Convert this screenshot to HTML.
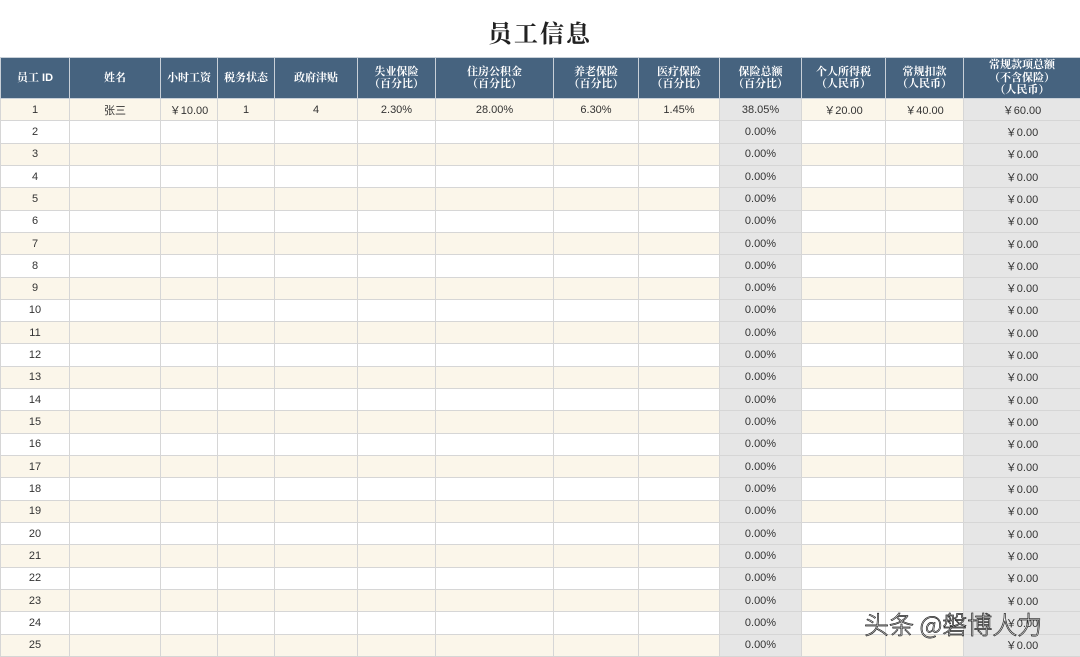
<!DOCTYPE html>
<html><head><meta charset="utf-8"><style>
body{margin:0;width:1080px;height:656px;background:#fff;overflow:hidden;position:relative;font-family:"Liberation Sans","Noto Sans CJK SC",sans-serif}
h1{position:absolute;top:14px;left:0;width:1080px;text-align:center;margin:0;font:bold 24px "Noto Serif CJK SC","Noto Sans CJK SC",serif;color:#222;letter-spacing:2px}
table{position:absolute;top:57px;left:0;border-collapse:collapse;table-layout:fixed;width:1080px}
td,th{border:1px solid #d6d6d6;text-align:center;font-size:11px;color:#333;padding:0;height:21.32px;overflow:hidden;white-space:nowrap}
th{background:#46637f;color:#fff;font-weight:bold;font-size:11px;line-height:12.5px;height:40px;border-color:#c8d0d8;font-family:"Liberation Sans","Noto Serif CJK SC",serif}
tr.o td{background:#fbf6ea}
td.g,tr.o td.g{background:#e6e6e6}
.wm{position:absolute;left:864px;top:606px;font:300 25px "Noto Sans CJK SC",sans-serif;color:#fff;-webkit-text-stroke:0.7px #222}
</style></head><body>
<h1>员工信息</h1>
<table>
<colgroup><col style="width:69px"><col style="width:91px"><col style="width:57px"><col style="width:57px"><col style="width:83px"><col style="width:78px"><col style="width:118px"><col style="width:85px"><col style="width:81px"><col style="width:82px"><col style="width:84px"><col style="width:78px"><col style="width:117px"></colgroup>
<tr><th>员工 ID</th><th>姓名</th><th>小时工资</th><th>税务状态</th><th>政府津贴</th><th>失业保险<br>（百分比）</th><th>住房公积金<br>（百分比）</th><th>养老保险<br>（百分比）</th><th>医疗保险<br>（百分比）</th><th>保险总额<br>（百分比）</th><th>个人所得税<br>（人民币）</th><th>常规扣款<br>（人民币）</th><th>常规款项总额<br>（不含保险）<br>（人民币）</th></tr>
<tr class="o"><td>1</td><td>张三</td><td>￥10.00</td><td>1</td><td>4</td><td>2.30%</td><td>28.00%</td><td>6.30%</td><td>1.45%</td><td class="g">38.05%</td><td>￥20.00</td><td>￥40.00</td><td class="g">￥60.00</td></tr>
<tr><td>2</td><td></td><td></td><td></td><td></td><td></td><td></td><td></td><td></td><td class="g">0.00%</td><td></td><td></td><td class="g">￥0.00</td></tr>
<tr class="o"><td>3</td><td></td><td></td><td></td><td></td><td></td><td></td><td></td><td></td><td class="g">0.00%</td><td></td><td></td><td class="g">￥0.00</td></tr>
<tr><td>4</td><td></td><td></td><td></td><td></td><td></td><td></td><td></td><td></td><td class="g">0.00%</td><td></td><td></td><td class="g">￥0.00</td></tr>
<tr class="o"><td>5</td><td></td><td></td><td></td><td></td><td></td><td></td><td></td><td></td><td class="g">0.00%</td><td></td><td></td><td class="g">￥0.00</td></tr>
<tr><td>6</td><td></td><td></td><td></td><td></td><td></td><td></td><td></td><td></td><td class="g">0.00%</td><td></td><td></td><td class="g">￥0.00</td></tr>
<tr class="o"><td>7</td><td></td><td></td><td></td><td></td><td></td><td></td><td></td><td></td><td class="g">0.00%</td><td></td><td></td><td class="g">￥0.00</td></tr>
<tr><td>8</td><td></td><td></td><td></td><td></td><td></td><td></td><td></td><td></td><td class="g">0.00%</td><td></td><td></td><td class="g">￥0.00</td></tr>
<tr class="o"><td>9</td><td></td><td></td><td></td><td></td><td></td><td></td><td></td><td></td><td class="g">0.00%</td><td></td><td></td><td class="g">￥0.00</td></tr>
<tr><td>10</td><td></td><td></td><td></td><td></td><td></td><td></td><td></td><td></td><td class="g">0.00%</td><td></td><td></td><td class="g">￥0.00</td></tr>
<tr class="o"><td>11</td><td></td><td></td><td></td><td></td><td></td><td></td><td></td><td></td><td class="g">0.00%</td><td></td><td></td><td class="g">￥0.00</td></tr>
<tr><td>12</td><td></td><td></td><td></td><td></td><td></td><td></td><td></td><td></td><td class="g">0.00%</td><td></td><td></td><td class="g">￥0.00</td></tr>
<tr class="o"><td>13</td><td></td><td></td><td></td><td></td><td></td><td></td><td></td><td></td><td class="g">0.00%</td><td></td><td></td><td class="g">￥0.00</td></tr>
<tr><td>14</td><td></td><td></td><td></td><td></td><td></td><td></td><td></td><td></td><td class="g">0.00%</td><td></td><td></td><td class="g">￥0.00</td></tr>
<tr class="o"><td>15</td><td></td><td></td><td></td><td></td><td></td><td></td><td></td><td></td><td class="g">0.00%</td><td></td><td></td><td class="g">￥0.00</td></tr>
<tr><td>16</td><td></td><td></td><td></td><td></td><td></td><td></td><td></td><td></td><td class="g">0.00%</td><td></td><td></td><td class="g">￥0.00</td></tr>
<tr class="o"><td>17</td><td></td><td></td><td></td><td></td><td></td><td></td><td></td><td></td><td class="g">0.00%</td><td></td><td></td><td class="g">￥0.00</td></tr>
<tr><td>18</td><td></td><td></td><td></td><td></td><td></td><td></td><td></td><td></td><td class="g">0.00%</td><td></td><td></td><td class="g">￥0.00</td></tr>
<tr class="o"><td>19</td><td></td><td></td><td></td><td></td><td></td><td></td><td></td><td></td><td class="g">0.00%</td><td></td><td></td><td class="g">￥0.00</td></tr>
<tr><td>20</td><td></td><td></td><td></td><td></td><td></td><td></td><td></td><td></td><td class="g">0.00%</td><td></td><td></td><td class="g">￥0.00</td></tr>
<tr class="o"><td>21</td><td></td><td></td><td></td><td></td><td></td><td></td><td></td><td></td><td class="g">0.00%</td><td></td><td></td><td class="g">￥0.00</td></tr>
<tr><td>22</td><td></td><td></td><td></td><td></td><td></td><td></td><td></td><td></td><td class="g">0.00%</td><td></td><td></td><td class="g">￥0.00</td></tr>
<tr class="o"><td>23</td><td></td><td></td><td></td><td></td><td></td><td></td><td></td><td></td><td class="g">0.00%</td><td></td><td></td><td class="g">￥0.00</td></tr>
<tr><td>24</td><td></td><td></td><td></td><td></td><td></td><td></td><td></td><td></td><td class="g">0.00%</td><td></td><td></td><td class="g">￥0.00</td></tr>
<tr class="o"><td>25</td><td></td><td></td><td></td><td></td><td></td><td></td><td></td><td></td><td class="g">0.00%</td><td></td><td></td><td class="g">￥0.00</td></tr>
</table>
<div class="wm">头条 @磐博人力</div>
</body></html>
